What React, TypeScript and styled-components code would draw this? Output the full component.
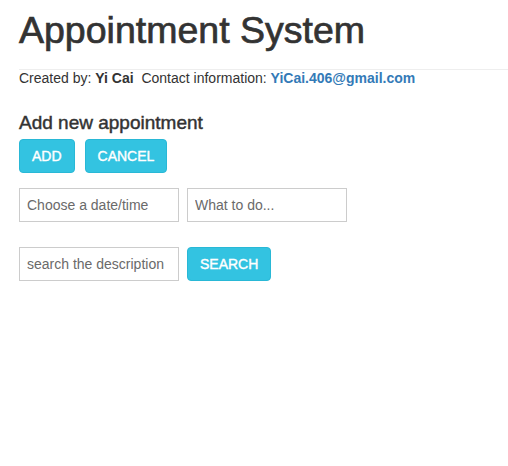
import React from "react";
import styled, { createGlobalStyle } from "styled-components";

const Global = createGlobalStyle`
  html, body { margin: 0; padding: 0; background: #fff; }
  body {
    font-family: "Liberation Sans", Arial, sans-serif;
    font-size: 14px;
    color: #333;
    overflow: hidden;
  }
  * { box-sizing: border-box; }
`;

const Page = styled.div`
  padding-left: 19px;
`;

const Header = styled.header`
  padding-bottom: 19px;
  border-bottom: 1px solid #eee;
`;

const Title = styled.h1`
  margin: 10px 0 0;
  font-size: 37.5px;
  line-height: 40px;
  font-weight: 400;
  color: #333;
  -webkit-text-stroke: 0.7px #333;
`;

const Credits = styled.p`
  margin: 0;
  font-size: 14px;
  line-height: 17px;
  color: #333;
`;

const Strong = styled.b`
  font-weight: 700;
`;

const Email = styled.a`
  color: #337ab7;
  font-weight: 700;
  text-decoration: none;
`;

const SectionTitle = styled.h4`
  margin: 25px 0 5px;
  font-size: 19px;
  line-height: 22px;
  font-weight: 400;
  color: #333;
  -webkit-text-stroke: 0.45px #333;
`;

const Row = styled.div<{ $gap: number; $mb: number }>`
  display: flex;
  align-items: center;
  gap: ${(p) => p.$gap}px;
  margin-bottom: ${(p) => p.$mb}px;
`;

const Button = styled.button`
  height: 34px;
  padding: 6px 12px;
  font-family: "Liberation Sans", Arial, sans-serif;
  font-size: 14px;
  line-height: 20px;
  color: #fff;
  -webkit-text-stroke: 0.4px #fff;
  background: #33c3e1;
  border: 1px solid #29b8d6;
  border-radius: 4px;
  cursor: pointer;
`;

const Input = styled.input`
  width: 160px;
  height: 34px;
  padding: 6px 7px;
  font-family: "Liberation Sans", Arial, sans-serif;
  font-size: 14px;
  color: #555;
  background: #fff;
  border: 1px solid #ccc;
  border-radius: 0;
  outline: none;
  &::placeholder {
    color: #6a6a6a;
    opacity: 1;
  }
`;

export default function App() {
  return (
    <Page>
      <Global />
      <Header>
        <Title>Appointment System</Title>
      </Header>
      <Credits>
        Created by: <Strong>Yi Cai</Strong>&nbsp; Contact information:{" "}
        <Email href="#">YiCai.406@gmail.com</Email>
      </Credits>
      <SectionTitle>Add new appointment</SectionTitle>
      <Row $gap={10} $mb={15}>
        <Button>ADD</Button>
        <Button>CANCEL</Button>
      </Row>
      <Row $gap={8} $mb={25}>
        <Input placeholder="Choose a date/time" />
        <Input placeholder="What to do..." />
      </Row>
      <Row $gap={8} $mb={0}>
        <Input placeholder="search the description" />
        <Button>SEARCH</Button>
      </Row>
    </Page>
  );
}
